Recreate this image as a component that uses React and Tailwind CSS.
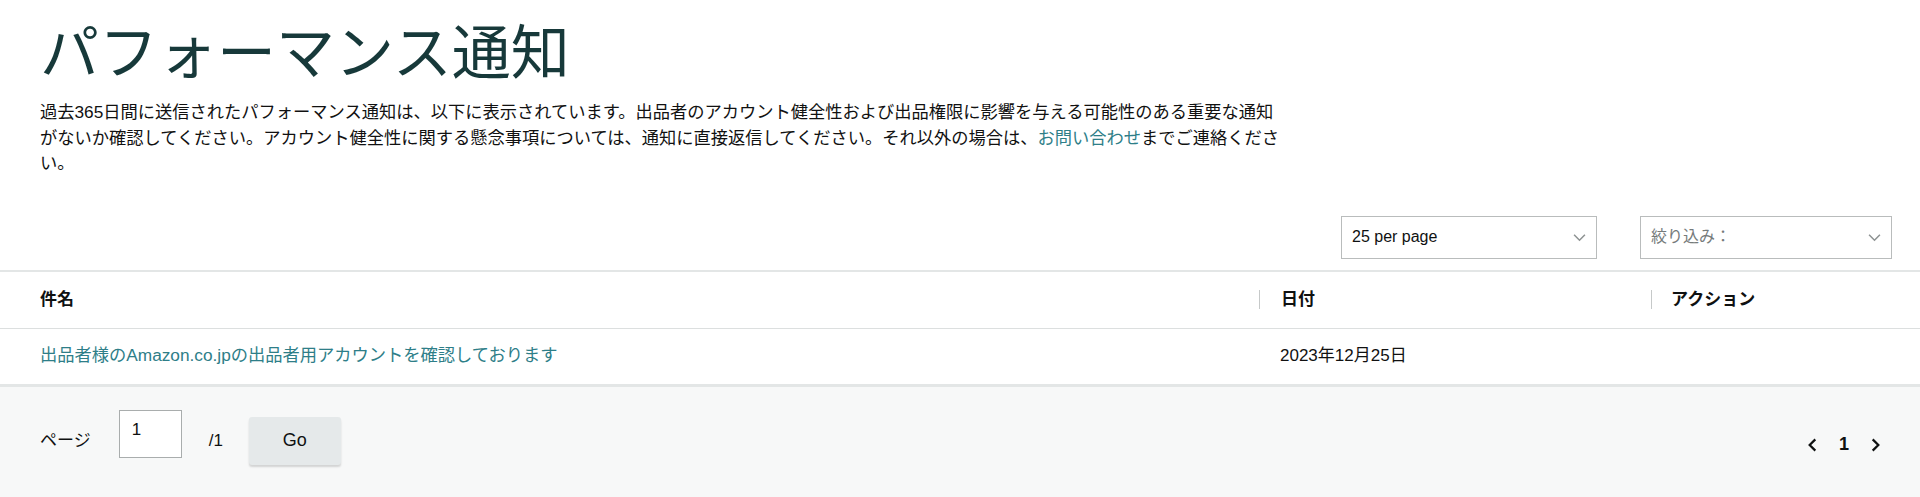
import React from 'react';

const FONT = '"Liberation Sans", "Noto Sans CJK JP", sans-serif';

function Chevron({ className = '' }) {
    return (
        <svg viewBox="0 0 12 8" className={className} fill="none" stroke="currentColor" strokeWidth="1.4">
            <path d="M1 1.5l5 5 5-5" />
        </svg>
    );
}

function SelectBox({ label, muted = false, width }) {
    return (
        <div className={`flex items-center justify-between h-[43px] border border-[#b9bcbc] bg-white pl-[10px] pr-[10px] ${width}`}>
            <span className={`text-[16px] ${muted ? 'text-[#767b7b]' : 'text-[#0f1111]'}`}>{label}</span>
            <Chevron className="w-[13px] h-[9px] text-[#8d9292]" />
        </div>
    );
}

export default function App() {
    return (
        <div className="min-h-screen bg-white text-[#0f1111] flex flex-col" style={{ fontFamily: FONT }}>
            <div className="px-10 pt-[18px]">
                <h1 className="text-[59px] leading-[72px] font-normal text-[#17393a]">パフォーマンス通知</h1>
                <p className="mt-[10px] text-[17.25px] leading-[25.5px] max-w-[1248px] text-[#111]">
                    過去365日間に送信されたパフォーマンス通知は、以下に表示されています。出品者のアカウント健全性および出品権限に影響を与える可能性のある重要な通知がないか確認してください。アカウント健全性に関する懸念事項については、通知に直接返信してください。それ以外の場合は、<a className="text-[#2e7e88]">お問い合わせ</a>までご連絡ください。
                </p>
            </div>

            <div className="flex justify-end gap-[43px] pr-[28px] mt-[39px]">
                <SelectBox label="25 per page" width="w-[256px]" />
                <SelectBox label="絞り込み：" muted width="w-[252px]" />
            </div>

            <div className="mt-[11px] border-t-2 border-[#e3e6e6]">
                <div className="flex items-center h-[57px] border-b border-[#dcdfdf] text-[17px] font-bold">
                    <div className="w-[1259px] pl-10">件名</div>
                    <div className="w-[392px] flex items-center">
                        <span className="w-px h-[19px] bg-[#c6c9c9]" />
                        <span className="ml-[21px]">日付</span>
                    </div>
                    <div className="flex-1 flex items-center">
                        <span className="w-px h-[19px] bg-[#c6c9c9]" />
                        <span className="ml-[19px]">アクション</span>
                    </div>
                </div>
                <div className="flex items-center h-[55px] text-[17.25px]">
                    <div className="w-[1259px] pl-10">
                        <a className="text-[#2e7e88]">出品者様のAmazon.co.jpの出品者用アカウントを確認しております</a>
                    </div>
                    <div className="w-[392px] pl-[21px] text-[#111] text-[17px]">2023年12月25日</div>
                    <div className="flex-1" />
                </div>
            </div>

            <div className="flex-1 bg-[#f7f8f8] border-t-[3px] border-[#e3e6e6] flex items-center justify-between pl-10 pr-[40px] pb-[2px]">
                <div className="flex items-center">
                    <span className="text-[17px]">ページ</span>
                    <div className="ml-[28px] mb-[13px] w-[63px] h-[48px] border border-[#a9adad] bg-white pl-[12px] pt-[9px] text-[17px] leading-[20px]">1</div>
                    <span className="ml-[27px] text-[17px]">/1</span>
                    <button className="ml-[26px] w-[92px] h-[48px] rounded-[3px] bg-[#e5e9ea] shadow-[0_2px_2px_rgba(0,0,0,0.15)] text-[18px]">Go</button>
                </div>
                <div className="flex items-center gap-[22px] text-[#0f1111] mt-[8px]">
                    <svg viewBox="0 0 8 12" className="w-[9px] h-[14px]" fill="none" stroke="currentColor" strokeWidth="2"><path d="M6.5 1l-5 5 5 5" /></svg>
                    <span className="text-[18px] font-bold">1</span>
                    <svg viewBox="0 0 8 12" className="w-[9px] h-[14px]" fill="none" stroke="currentColor" strokeWidth="2"><path d="M1.5 1l5 5-5 5" /></svg>
                </div>
            </div>
        </div>
    );
}
